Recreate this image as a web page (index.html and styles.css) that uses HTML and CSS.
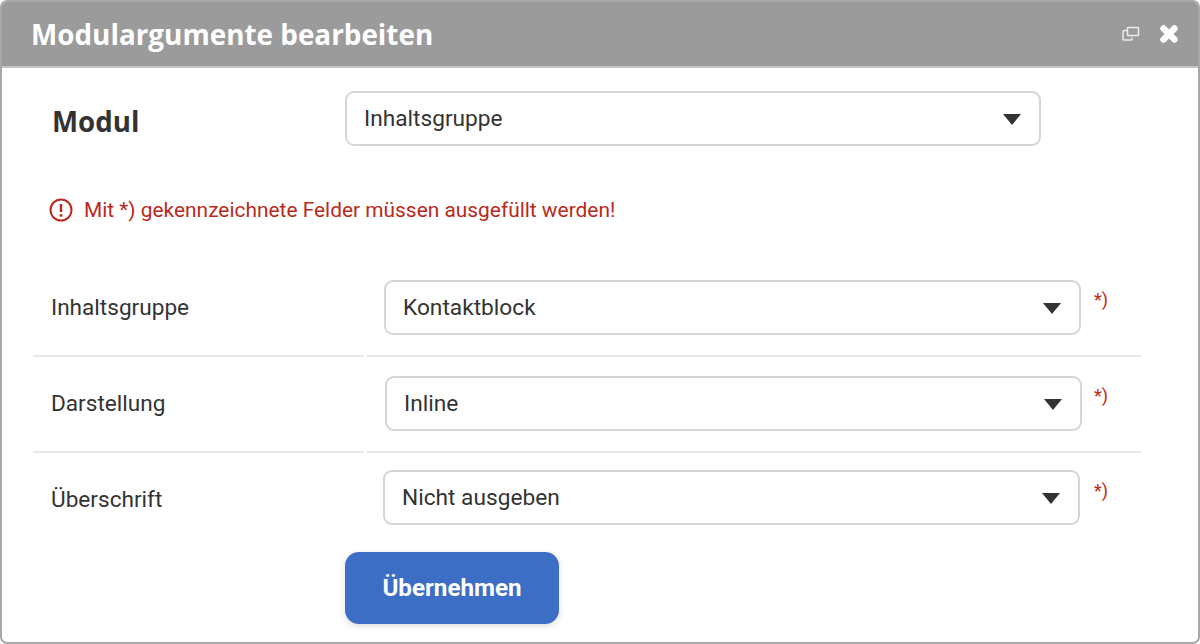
FILE: index.html
```html
<!DOCTYPE html>
<html lang="de">
<head>
    <meta charset="UTF-8">
    <meta name="viewport" content="width=device-width, initial-scale=1.0">
    <title>Modulargumente bearbeiten</title>
    <link rel="stylesheet" href="styles.css">
</head>
<body>
    <div class="dialog">
        <div class="dialog-header">
            <div class="dialog-title">Modulargumente bearbeiten</div>
            <div class="dialog-icons">
                <svg class="icon-restore" width="18" height="16" viewBox="0 0 18 16" fill="none" stroke="#ececec" stroke-width="1.5">
                    <rect x="5.5" y="1.5" width="11" height="8" rx="0.5"/>
                    <path d="M5 4.5H2a1 1 0 0 0-1 1V13a1 1 0 0 0 1 1h7a1 1 0 0 0 1-1v-1.5"/>
                </svg>
                <svg class="icon-close" width="20" height="20" viewBox="0 0 20 20" fill="none" stroke="#ffffff" stroke-width="6.4" stroke-linecap="round">
                    <path d="M4.500 4.500 15.500 15.500M15.500 4.500 4.500 15.500"/>
                </svg>
            </div>
        </div>

        <div class="module-row">
            <div class="module-label">Modul</div>
            <div class="select-box module-select">Inhaltsgruppe</div>
        </div>

        <div class="notice">
            <svg width="24" height="24" viewBox="0 0 24 24" fill="none" stroke="#b92a1c" stroke-width="2">
                <circle cx="12" cy="12" r="10.500"/>
                <path d="M12 6v8" stroke-width="2.400"/>
                <circle cx="12" cy="17.500" r="1.400" fill="#b92a1c" stroke="none"/>
            </svg>
            <span>Mit *) gekennzeichnete Felder müssen ausgefüllt werden!</span>
        </div>

        <div class="args">
            <div class="arg-row">
                <div class="arg-label">Inhaltsgruppe</div>
                <div class="arg-field">
                    <div class="select-box">Kontaktblock</div>
                    <span class="required">*)</span>
                </div>
            </div>
            <div class="arg-row arg-row-second">
                <div class="arg-label">Darstellung</div>
                <div class="arg-field">
                    <div class="select-box">Inline</div>
                    <span class="required">*)</span>
                </div>
            </div>
            <div class="arg-row arg-row-last">
                <div class="arg-label">Überschrift</div>
                <div class="arg-field">
                    <div class="select-box">Nicht ausgeben</div>
                    <span class="required">*)</span>
                </div>
            </div>
        </div>

        <div class="dialog-footer">
            <button class="btn-apply">Übernehmen</button>
        </div>
    </div>
</body>
</html>
```

FILE: styles.css
```css
html, body {
    margin: 0;
    padding: 0;
    background: #ffffff;
}

body {
    font-family: Roboto, sans-serif;
    color: #333333;
}

.dialog {
    box-sizing: border-box;
    width: 1200px;
    height: 644px;
    border: 2px solid #a8a8a8;
    border-radius: 7px;
    overflow: hidden;
    background: #ffffff;
}

.dialog-header {
    box-sizing: border-box;
    height: 66px;
    display: flex;
    justify-content: space-between;
    align-items: center;
    padding: 0 19px 0 29px;
    background: #9b9b9b;
    border-bottom: 2px solid #c4c4c4;
}

.dialog-title {
    font-family: "Open Sans", sans-serif;
    font-size: 27.85px;
    font-weight: 700;
    color: #ffffff;
}

.dialog-icons {
    display: flex;
    align-items: center;
    gap: 19px;
}

.module-row {
    display: flex;
    padding: 23px 0 0 50px;
}

.module-label {
    width: 293px;
    padding-top: 11px;
    font-family: "Open Sans", sans-serif;
    font-size: 27.7px;
    font-weight: 700;
}

.select-box {
    box-sizing: border-box;
    position: relative;
    width: 697px;
    height: 55px;
    padding-left: 17px;
    line-height: 51px;
    font-size: 22.7px;
    color: #333333;
    background: #ffffff;
    border: 2px solid #d6d6d6;
    border-radius: 9px;
}

.select-box::after {
    content: "";
    position: absolute;
    right: 18px;
    top: 21px;
    border-left: 9px solid transparent;
    border-right: 9px solid transparent;
    border-top: 11px solid #333333;
}

.module-select {
    width: 696px;
}

.notice {
    display: flex;
    align-items: center;
    gap: 11px;
    margin: 52px 0 0 47px;
    font-size: 20.9px;
    color: #b92a1c;
}

.args {
    margin: 37px 0 0 31px;
    width: 1108px;
}

.arg-row {
    display: grid;
    grid-template-columns: 331px 774px;
    column-gap: 3px;
    height: 98px;
    background: linear-gradient(#e8e8e8, #e8e8e8) left bottom / 331px 2px no-repeat,
                linear-gradient(#e8e8e8, #e8e8e8) right bottom / 774px 2px no-repeat;
}

.arg-label {
    padding: 23px 0 0 18px;
    line-height: 51px;
    font-size: 22.6px;
}

.arg-field {
    display: flex;
    align-items: flex-start;
    padding: 21px 0 0 17px;
}

.required {
    margin: 9px 0 0 13px;
    font-size: 18px;
    color: #b92a1c;
}

.arg-row-second {
    height: 96px;
}

.arg-row-second .arg-field {
    padding: 19px 0 0 18px;
}

.arg-row-second .required {
    margin-left: 12px;
}

.arg-row-second .arg-label {
    padding-top: 21px;
}

.arg-row-last {
    height: auto;
    background: none;
}

.arg-row-last .arg-field {
    padding: 17px 0 0 16px;
}

.arg-row-last .required {
    margin: 10px 0 0 14px;
}

.arg-row-last .arg-label {
    padding-top: 21px;
}

.dialog-footer {
    padding: 27px 0 0 343px;
}

.btn-apply {
    width: 214px;
    height: 72px;
    border: none;
    border-radius: 14px;
    background: #3b6ec4;
    color: #ffffff;
    font-family: Roboto, sans-serif;
    font-size: 24.2px;
    font-weight: 700;
    box-shadow: 0 2px 6px rgba(0, 0, 0, 0.15);
}
```
